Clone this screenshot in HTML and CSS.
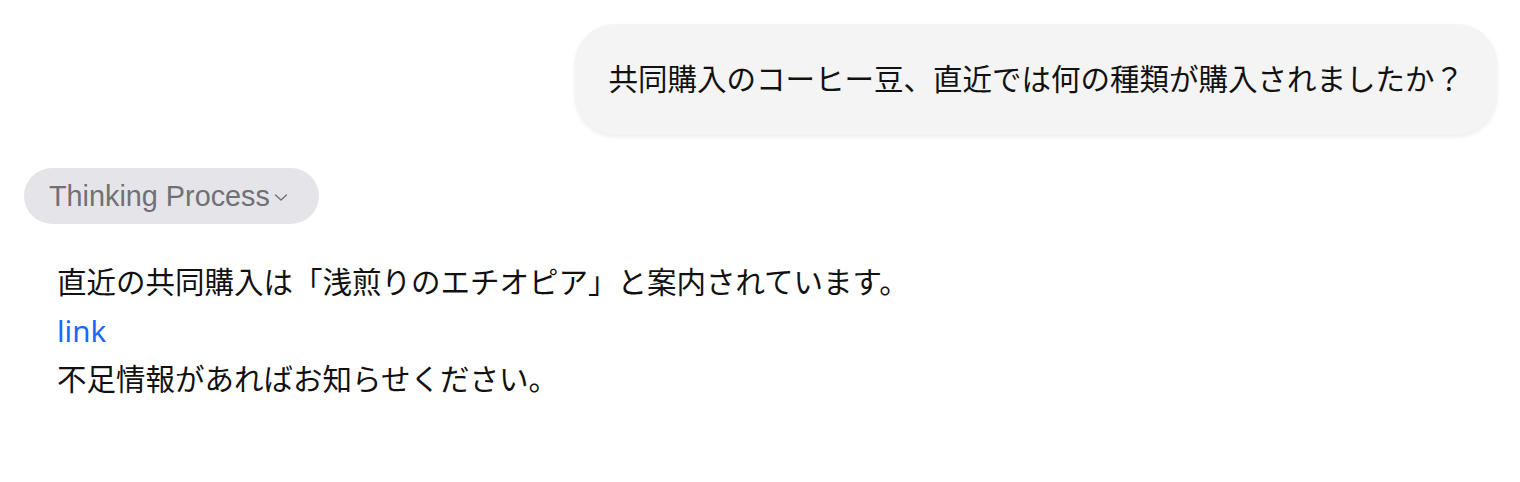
FILE: index.html
```html
<!DOCTYPE html>
<html lang="ja">
<head>
  <meta charset="UTF-8" />
  <meta name="viewport" content="width=device-width, initial-scale=1.0" />
  <title>Chat</title>
  <link rel="stylesheet" href="styles.css">
</head>
<body>
  <div class="chat">
    <div class="message user">
      <div class="bubble">共同購入のコーヒー豆、直近では何の種類が購入されましたか？</div>
    </div>
    <div class="message assistant">
      <button class="thinking">
        Thinking Process
        <svg class="chevron" width="14" height="9" viewBox="0 0 14 9">
          <path d="M1.5 2 L7 7 L12.5 2" fill="none" stroke="currentColor" stroke-width="1.4" stroke-linecap="round" stroke-linejoin="round"/>
        </svg>
      </button>
      <div class="answer">
        <p>直近の共同購入は「浅煎りのエチオピア」と案内されています。</p>
        <p><a href="#">link</a></p>
        <p>不足情報があればお知らせください。</p>
      </div>
    </div>
  </div>
</body>
</html>
```

FILE: styles.css
```css
body {
  margin: 0;
  background-color: #ffffff;
  font-family: 'Liberation Sans', 'Noto Sans CJK JP', sans-serif;
  color: #111111;
}

.chat {
  padding: 24px 23px 40px 24px;
}

.message.user {
  display: flex;
  justify-content: flex-end;
}

.bubble {
  background-color: #f4f4f4;
  border-radius: 40px;
  padding: 34px 33px;
  font-size: 29.5px;
  line-height: 43px;
  box-shadow: 0 2px 4px rgba(0, 0, 0, 0.08);
}

.message.assistant {
  margin-top: 33px;
}

.thinking {
  display: inline-flex;
  align-items: center;
  gap: 4px;
  height: 56px;
  padding: 0 31px 0 25px;
  border: none;
  border-radius: 28px;
  background-color: #e5e5e9;
  color: #707076;
  font-family: 'Liberation Sans', sans-serif;
  font-size: 28.8px;
  cursor: pointer;
}

.chevron {
  margin-top: 2px;
}

.answer {
  margin-top: 35px;
  padding-left: 33px;
  font-size: 29.5px;
  line-height: 48px;
}

.answer p {
  margin: 0;
}

.answer a {
  font-family: 'Noto Sans', sans-serif;
  color: #1a68ff;
  text-decoration: none;
}
```
